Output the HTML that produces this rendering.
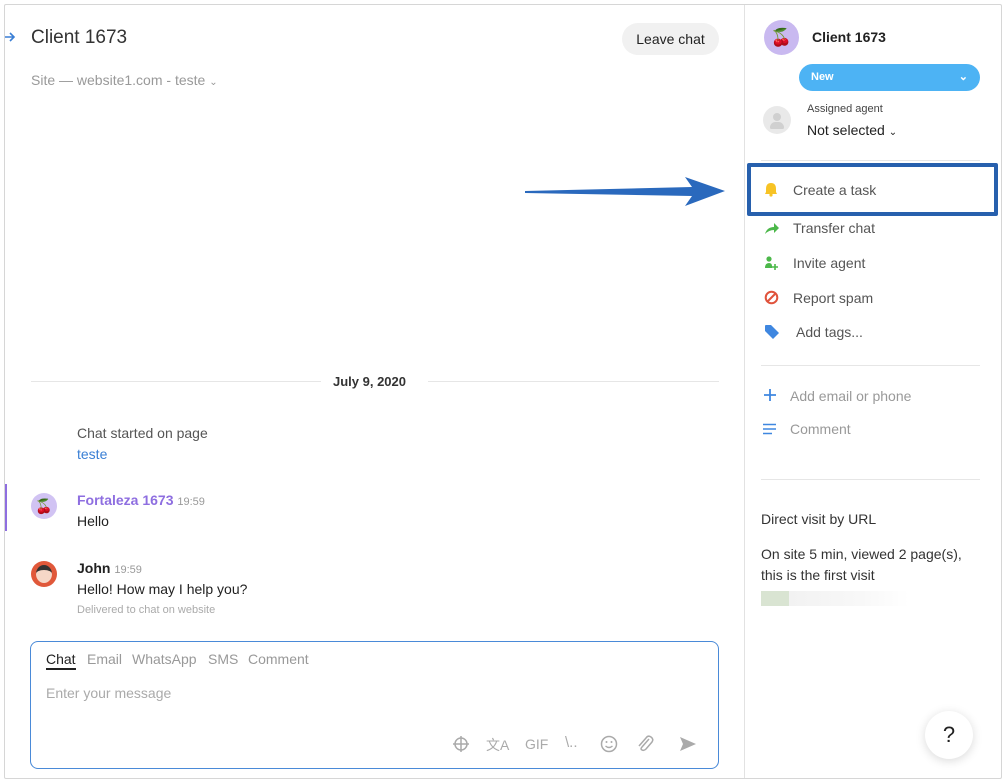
<!DOCTYPE html>
<html><head><meta charset="utf-8"><style>
*{margin:0;padding:0;box-sizing:border-box}
body{width:1007px;height:783px;background:#fff;font-family:"Liberation Sans",sans-serif;position:relative;overflow:hidden;color:#222}
.a{position:absolute;white-space:nowrap}
.frame{position:absolute;left:4px;top:4px;width:998px;height:775px;border:1px solid #d6d6d6;border-radius:2px}
.vline{position:absolute;left:744px;top:5px;width:1px;height:773px;background:#e2e2e2}
.hl{position:absolute;height:1px;background:#e6e6e6}
.act{font-size:14px;color:#555}
.tab{font-size:14px;color:#999}
</style></head><body>
<div class="frame"></div>
<div class="vline"></div>
<!-- left header -->
<svg class="a" style="left:4px;top:31px" width="12" height="12" viewBox="0 0 12 12"><path d="M1 6H10M6 2L10 6L6 10" stroke="#3a7fd5" stroke-width="1.6" fill="none"/></svg>
<div class="a" style="left:31px;top:27px;font-size:19px;color:#333">Client 1673</div>
<div class="a" style="left:31px;top:72px;font-size:14px;color:#999">Site — website1.com - teste <span style="font-size:10px">⌄</span></div>
<div class="a" style="left:622px;top:23px;width:97px;height:32px;background:#f1f1f1;border-radius:16px;font-size:14px;color:#222;text-align:center;line-height:32px">Leave chat</div>
<!-- arrow -->
<svg class="a" style="left:520px;top:172px" width="210" height="40" viewBox="0 0 210 40"><path d="M5 19 L172 15 L165 5 L205 19 L165 34 L172 24 L5 21 Z" fill="#2a69bd"/></svg>
<!-- date -->
<div class="hl" style="left:31px;top:381px;width:290px"></div>
<div class="hl" style="left:428px;top:381px;width:291px"></div>
<div class="a" style="left:333px;top:374px;font-size:13px;font-weight:bold;color:#333">July 9, 2020</div>
<div class="a" style="left:77px;top:425px;font-size:14px;color:#555">Chat started on page</div>
<div class="a" style="left:77px;top:446px;font-size:14px;color:#3a7fd5">teste</div>
<!-- messages -->
<div class="a" style="left:5px;top:484px;width:2px;height:47px;background:#8e6ee0"></div>
<div class="a" style="left:31px;top:493px;width:26px;height:26px;border-radius:50%;background:#d1c3f3;text-align:center;font-size:14px;line-height:26px;color:#c22">🍒</div>
<div class="a" style="left:77px;top:492px;font-size:14px;font-weight:bold;color:#8e6ee0">Fortaleza 1673 <span style="font-weight:normal;font-size:11px;color:#999">19:59</span></div>
<div class="a" style="left:77px;top:513px;font-size:14px;color:#222">Hello</div>
<div class="a" style="left:31px;top:561px;width:26px;height:26px;border-radius:50%;background:#e0583a"><div style="position:absolute;left:5px;top:4px;width:16px;height:18px;border-radius:50%;background:#f6d7c7;border-top:5px solid #333"></div></div>
<div class="a" style="left:77px;top:560px;font-size:14px;font-weight:bold;color:#222">John <span style="font-weight:normal;font-size:11px;color:#999">19:59</span></div>
<div class="a" style="left:77px;top:581px;font-size:14px;color:#222">Hello! How may I help you?</div>
<div class="a" style="left:77px;top:604px;font-size:11px;color:#aaa">Delivered to chat on website</div>
<!-- composer -->
<div class="a" style="left:30px;top:641px;width:689px;height:128px;border:1px solid #4a8ad8;border-radius:8px"></div>
<div class="a tab" style="left:46px;top:651px;color:#222;border-bottom:2px solid #222;padding-bottom:1px">Chat</div>
<div class="a tab" style="left:87px;top:651px">Email</div>
<div class="a tab" style="left:132px;top:651px">WhatsApp</div>
<div class="a tab" style="left:208px;top:651px">SMS</div>
<div class="a tab" style="left:248px;top:651px">Comment</div>
<div class="a" style="left:46px;top:685px;font-size:14px;color:#aaa">Enter your message</div>
<svg class="a" style="left:452px;top:735px" width="18" height="18" viewBox="0 0 18 18"><circle cx="9" cy="9" r="6" stroke="#aaa" stroke-width="1.5" fill="none"/><path d="M9 1V17M1 9H17" stroke="#aaa" stroke-width="1.5"/></svg>
<div class="a" style="left:486px;top:735px;font-size:14px;color:#aaa">文A</div>
<div class="a" style="left:525px;top:736px;font-size:14px;color:#aaa">GIF</div>
<div class="a" style="left:565px;top:734px;font-size:15px;color:#aaa">\..</div>
<svg class="a" style="left:600px;top:735px" width="18" height="18" viewBox="0 0 18 18"><circle cx="9" cy="9" r="7.5" stroke="#aaa" stroke-width="1.5" fill="none"/><circle cx="6.5" cy="7" r="1" fill="#aaa"/><circle cx="11.5" cy="7" r="1" fill="#aaa"/><path d="M5.5 11Q9 14 12.5 11" stroke="#aaa" stroke-width="1.4" fill="none"/></svg>
<svg class="a" style="left:635px;top:734px" width="20" height="20" viewBox="0 0 20 20"><path d="M14 5L7 13Q5 15 7 16Q9 17 11 15L17 8Q19 5 16 3Q13 1 11 4L4 12" stroke="#aaa" stroke-width="1.5" fill="none"/></svg>
<svg class="a" style="left:679px;top:736px" width="18" height="16" viewBox="0 0 18 16"><path d="M1 1L17 8L1 15L4 8Z" fill="#aaa"/></svg>
<!-- right panel -->
<div class="a" style="left:764px;top:20px;width:35px;height:35px;border-radius:50%;background:#c9b9f0;text-align:center;line-height:35px;font-size:17px">🍒</div>
<div class="a" style="left:812px;top:29px;font-size:14px;font-weight:bold;color:#222">Client 1673</div>
<div class="a" style="left:799px;top:64px;width:181px;height:27px;border-radius:14px;background:#4db3f4;color:#fff;font-size:11px;font-weight:bold;line-height:27px;padding-left:12px">New<span style="position:absolute;right:12px;font-size:11px">⌄</span></div>
<div class="a" style="left:763px;top:106px;width:28px;height:28px;border-radius:50%;background:#e9e9e9"><div style="position:absolute;left:10px;top:7px;width:8px;height:8px;border-radius:50%;background:#d0d0d0"></div><div style="position:absolute;left:7px;top:16px;width:14px;height:7px;border-radius:7px 7px 2px 2px;background:#d0d0d0"></div></div>
<div class="a" style="left:807px;top:103px;font-size:11px;color:#444">Assigned agent</div>
<div class="a" style="left:807px;top:122px;font-size:14px;color:#222">Not selected <span style="font-size:10px">⌄</span></div>
<div class="hl" style="left:761px;top:160px;width:219px"></div>
<div class="a" style="left:747px;top:163px;width:251px;height:53px;border:4px solid #2760ad;border-radius:2px"></div>
<svg class="a" style="left:764px;top:182px" width="14" height="15" viewBox="0 0 14 15"><path d="M7 1Q12 1 12 7V10L13 12H1L2 10V7Q2 1 7 1Z" fill="#f7c325"/><circle cx="7" cy="13" r="1.6" fill="#f7c325"/></svg>
<div class="a act" style="left:793px;top:182px">Create a task</div>
<svg class="a" style="left:764px;top:221px" width="16" height="14" viewBox="0 0 16 14"><path d="M1 13Q3 6 10 6V2L15 7L10 12V9Q5 9 1 13Z" fill="#4cb84a"/></svg>
<div class="a act" style="left:793px;top:220px">Transfer chat</div>
<svg class="a" style="left:764px;top:255px" width="15" height="16" viewBox="0 0 15 16"><circle cx="5" cy="4" r="2.6" fill="#4cb84a"/><path d="M1 13Q1 8 5 8Q8 8 8 11V13Z" fill="#4cb84a"/><path d="M11 9V15M8 12H14" stroke="#4cb84a" stroke-width="1.6"/></svg>
<div class="a act" style="left:793px;top:255px">Invite agent</div>
<svg class="a" style="left:764px;top:290px" width="15" height="15" viewBox="0 0 15 15"><circle cx="7.5" cy="7.5" r="5.8" stroke="#e0533c" stroke-width="2" fill="none"/><path d="M3.5 11.5L11.5 3.5" stroke="#e0533c" stroke-width="2"/></svg>
<div class="a act" style="left:793px;top:290px">Report spam</div>
<svg class="a" style="left:764px;top:324px" width="16" height="15" viewBox="0 0 16 15"><path d="M1 2Q1 1 2 1H7L15 9L9 15L1 7Z" fill="#3f87e0"/></svg>
<div class="a act" style="left:796px;top:324px">Add tags...</div>
<div class="hl" style="left:761px;top:365px;width:219px"></div>
<svg class="a" style="left:763px;top:388px" width="14" height="14" viewBox="0 0 14 14"><path d="M7 1V13M1 7H13" stroke="#3f87e0" stroke-width="1.8"/></svg>
<div class="a" style="left:790px;top:388px;font-size:14px;color:#999">Add email or phone</div>
<svg class="a" style="left:763px;top:423px" width="14" height="12" viewBox="0 0 14 12"><path d="M0 1.5H13M0 6H13M0 10.5H9" stroke="#3f87e0" stroke-width="1.6"/></svg>
<div class="a" style="left:790px;top:421px;font-size:14px;color:#999">Comment</div>
<div class="hl" style="left:761px;top:479px;width:219px"></div>
<div class="a" style="left:761px;top:511px;font-size:14px;color:#333">Direct visit by URL</div>
<div class="a" style="left:761px;top:544px;font-size:14px;color:#333;line-height:21px">On site 5 min, viewed 2 page(s),<br>this is the first visit</div>
<div class="a" style="left:761px;top:591px;width:28px;height:15px;background:#d9e4d2"></div>
<div class="a" style="left:789px;top:591px;width:120px;height:15px;background:linear-gradient(90deg,#f2f2f2,#f8f8f8 60%,#fff)"></div>
<div class="a" style="left:925px;top:711px;width:48px;height:48px;border-radius:50%;background:#fff;box-shadow:0 2px 10px rgba(0,0,0,.15);text-align:center;line-height:48px;font-size:22px;color:#222">?</div>
</body></html>
